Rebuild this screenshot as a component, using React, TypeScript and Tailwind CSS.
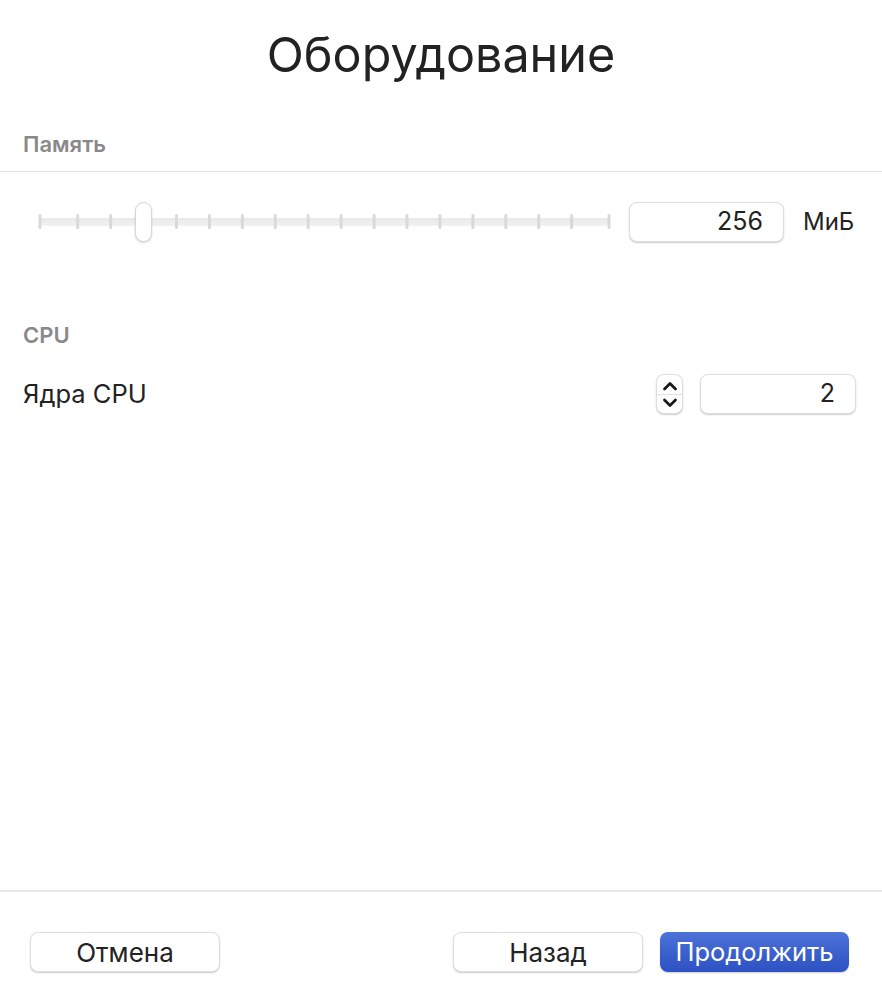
import React from "react";

const tickXs: number[] = [2, ...Array.from({ length: 16 }, (_, i) => 39.7 + 32.93 * i), 571];

function Slider() {
  return (
    <div className="relative w-[573px] h-[40px] shrink-0">
      <svg width="573" height="40" className="absolute left-0 top-0">
        <defs>
          <linearGradient id="trk" x1="0" y1="0" x2="0" y2="1">
            <stop offset="0" stopColor="#e9e9e9" />
            <stop offset="1" stopColor="#f1f1f1" />
          </linearGradient>
        </defs>
        <rect x="1" y="16" width="571" height="8" rx="4" fill="url(#trk)" />
        {tickXs.map((x, i) => (
          <rect key={i} x={x - 1.5} y="12" width="3" height="15" rx="1.5" fill="#d9d9d9" />
        ))}
      </svg>
      <div className="absolute left-[97px] top-0 w-[17px] h-[40px] rounded-full bg-white border border-[#d6d6d6] shadow-[0_1px_2px_rgba(0,0,0,0.18)]" />
    </div>
  );
}

function Field({ value, width }: { value: string; width: string }) {
  return (
    <div
      className={`${width} h-[40px] rounded-[8px] bg-white border border-[#dedede] shadow-[0_1px_1.5px_rgba(0,0,0,0.2)] flex items-center justify-end pr-[20px] text-[25px] text-[#222]`}
    >
      {value}
    </div>
  );
}

function Stepper() {
  return (
    <div className="w-[27px] h-[40px] rounded-[8px] bg-white border border-[#dedede] shadow-[0_1px_1.5px_rgba(0,0,0,0.2)] flex flex-col overflow-hidden">
      <div className="flex-1 flex items-end justify-center pb-[3px] border-b border-[#e3e3e3]">
        <svg width="16" height="10" viewBox="0 0 16 10">
          <path d="M2.5 8 L8 2.5 L13.5 8" fill="none" stroke="#1a1a1a" strokeWidth="2.8" strokeLinecap="round" strokeLinejoin="round" />
        </svg>
      </div>
      <div className="flex-1 flex items-start justify-center pt-[3px]">
        <svg width="16" height="10" viewBox="0 0 16 10">
          <path d="M2.5 2 L8 7.5 L13.5 2" fill="none" stroke="#1a1a1a" strokeWidth="2.8" strokeLinecap="round" strokeLinejoin="round" />
        </svg>
      </div>
    </div>
  );
}

export default function App() {
  return (
    <div className="w-[882px] h-[1004px] bg-white flex flex-col font-['Inter','Noto_Sans',sans-serif] text-[#232323]">
      <h1 className="text-center text-[48.5px] leading-[58px] pt-[26px] text-[#222]">Оборудование</h1>

      <div className="mt-[47px] px-[23px] text-[22px] leading-[26px] font-semibold text-[#898989]">Память</div>
      <div className="mt-[14px] h-px bg-[#e0e0e0]" />

      <div className="mt-[30px] h-[40px] flex items-center pl-[38px]">
        <Slider />
        <div className="ml-[18px]">
          <Field value="256" width="w-[155px]" />
        </div>
        <div className="ml-[19px] text-[24px] text-[#232323]">МиБ</div>
      </div>

      <div className="mt-[80px] px-[23px] text-[22px] leading-[26px] font-semibold text-[#898989]">CPU</div>

      <div className="mt-[26px] h-[40px] flex items-center pl-[23px] pr-[26px]">
        <div className="flex-1 text-[25.5px] text-[#232323]">Ядра CPU</div>
        <Stepper />
        <div className="ml-[17px]">
          <Field value="2" width="w-[156px]" />
        </div>
      </div>

      <div className="flex-1" />
      <div className="h-[2px] bg-[#e6e6e6]" />

      <div className="mt-[40px] mb-[32px] h-[40px] flex items-center pl-[30px] pr-[33px]">
        <button className="w-[190px] h-[40px] rounded-[8px] bg-white border border-[#dedede] shadow-[0_1px_1.5px_rgba(0,0,0,0.2)] text-[26px] text-[#232323]">
          Отмена
        </button>
        <div className="flex-1" />
        <button className="w-[190px] h-[40px] rounded-[8px] bg-white border border-[#dedede] shadow-[0_1px_1.5px_rgba(0,0,0,0.2)] text-[26px] text-[#232323]">
          Назад
        </button>
        <button className="ml-[17px] w-[189px] h-[40px] rounded-[8px] bg-gradient-to-b from-[#4d72d9] to-[#2d51c2] shadow-[0_1px_1.5px_rgba(0,0,0,0.2)] text-[25.5px] text-white">
          Продолжить
        </button>
      </div>
    </div>
  );
}
